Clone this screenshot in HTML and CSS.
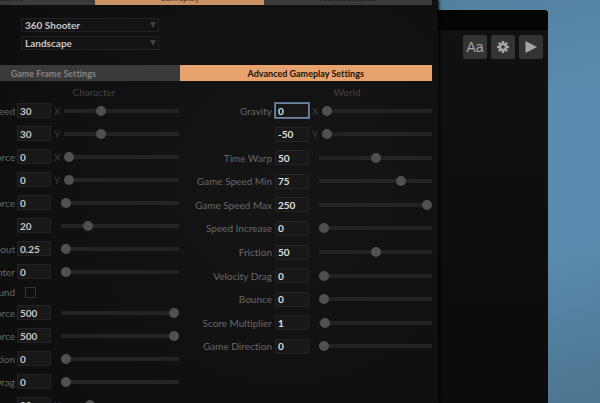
FILE: index.html
```html
<!DOCTYPE html>
<html lang="en">
<head>
  <meta charset="UTF-8" />
  <meta name="viewport" content="width=device-width, initial-scale=1.0" />
  <title>Gameplay Settings</title>
  <link rel="stylesheet" href="styles.css">
</head>
<body>
  <main class="panel">
    <div class="panel-content">
      <nav class="main-tabs">
        <button class="tab">Game</button>
        <button class="tab active">Gameplay</button>
        <button class="tab">Achievements</button>
      </nav>

      <div class="pickers">
        <div class="picker">
          <select aria-label="Game type">
            <option>360 Shooter</option>
          </select>
          <svg viewBox="0 0 6 6"><path d="M0 0h6L3 6z"/></svg>
        </div>
        <div class="picker">
          <select aria-label="Orientation">
            <option>Landscape</option>
          </select>
          <svg viewBox="0 0 6 6"><path d="M0 0h6L3 6z"/></svg>
        </div>
      </div>

      <nav class="sub-tabs">
        <button class="tab">Game Frame Settings</button>
        <button class="tab active">Advanced Gameplay Settings</button>
      </nav>

      <div class="columns">
        <section class="column character">
          <h2>Character</h2>
          <div class="rows" id="character"></div>
        </section>
        <section class="column world">
          <h2>World</h2>
          <div class="rows" id="world"></div>
        </section>
      </div>
    </div>
  </main>

  <aside class="preview">
    <div class="title-bar"></div>
    <div class="toolbar">
      <button aria-label="Text"><span>Aa</span></button>
      <button aria-label="Settings">
        <svg viewBox="0 0 12 12">
          <g fill="currentColor">
            <rect x="4.800" y="0" width="2.400" height="12"/>
            <rect x="4.800" y="0" width="2.400" height="12" transform="rotate(45 6 6)"/>
            <rect x="4.800" y="0" width="2.400" height="12" transform="rotate(90 6 6)"/>
            <rect x="4.800" y="0" width="2.400" height="12" transform="rotate(135 6 6)"/>
          </g>
          <circle cx="6" cy="6" r="3" fill="#343434" stroke="currentColor" stroke-width="2.400"/>
        </svg>
      </button>
      <button aria-label="Play">
        <svg viewBox="0 0 12 12"><path d="M0.500 0L12 6L0.500 12z" fill="currentColor"/></svg>
      </button>
    </div>
  </aside>

  <script>
    const character = [
      { label: "Speed", value: "30", axis: "X" },
      { label: "", name: "Speed Y", value: "30", axis: "Y" },
      { label: "Force", value: "0", axis: "X" },
      { label: "", name: "Force Y", value: "0", axis: "Y" },
      { label: "Force", value: "0" },
      { label: "", name: "Force amount", value: "20" },
      { label: "Timeout", value: "0.25" },
      { label: "Counter", value: "0" },
      { label: "Ground", checkbox: true },
      { label: "Force", value: "500", max: 500 },
      { label: "Force", value: "500", max: 500 },
      { label: "Friction", value: "0" },
      { label: "Drag", value: "0" },
      { label: "Drag", value: "20", axis: "X" }
    ];

    const world = [
      { label: "Gravity", value: "0", axis: "X", focused: true },
      { label: "", name: "Gravity Y", value: "-50", axis: "Y", min: -50 },
      { label: "Time Warp", value: "50" },
      { label: "Game Speed Min", value: "75" },
      { label: "Game Speed Max", value: "250", max: 250 },
      { label: "Speed Increase", value: "0" },
      { label: "Friction", value: "50" },
      { label: "Velocity Drag", value: "0" },
      { label: "Bounce", value: "0" },
      { label: "Score Multiplier", value: "1" },
      { label: "Game Direction", value: "0" }
    ];

    function renderRows(target, rows) {
      document.getElementById(target).innerHTML = rows.map((row, i) => {
        const id = `${target}-${i}`;
        const name = row.label || row.name;
        if (row.checkbox) {
          return `
            <div class="row check-row">
              <label for="${id}">${row.label}</label>
              <input type="checkbox" id="${id}" />
            </div>`;
        }
        return `
          <div class="row">
            <label for="${id}">${row.label}</label>
            <input type="text" id="${id}" class="${row.focused ? "focused" : ""}" value="${row.value}" aria-label="${name}" />
            <span class="axis">${row.axis || ""}</span>
            <input type="range" min="${row.min || 0}" max="${row.max || 100}" step="any" value="${row.value}" aria-label="${name} slider" />
          </div>`;
      }).join("");
    }

    renderRows("character", character);
    renderRows("world", world);
  </script>
</body>
</html>
```
FILE: styles.css
```css
* { box-sizing: border-box; margin: 0; padding: 0; }

body {
  display: flex;
  height: 100vh;
  padding-right: 52px;
  overflow: hidden;
  font-family: Lato, "Open Sans", sans-serif;
  font-size: 10px;
  font-variant-ligatures: none;
  color: #c8c8c8;
  background: linear-gradient(165deg, #4d7690 0%, #5b8bae 45%, #5b8bae 70%, #4d7490 100%);
}

button, input, select {
  font: inherit;
  color: inherit;
  border: none;
}

.panel {
  flex: 1;
  min-width: 0;
  padding-right: 6px;
  overflow: hidden;
  background: radial-gradient(circle at 65% 45%, #151515, #0d0d0d);
  box-shadow: 1px 0 3px #000;
  z-index: 1;
}

/* the panel is scrolled a little to the right */
.panel-content {
  margin-left: -73px;
}

.main-tabs, .sub-tabs {
  display: flex;
}

.main-tabs {
  height: 5px;
  align-items: flex-end;
}

.tab {
  flex: 1;
  height: 16px;
  font-size: 9px;
  font-weight: bold;
  color: #858585;
  background: #3a3a3a;
}

.main-tabs .tab {
  color: #222;
}

.tab.active {
  color: #1c120b;
  background: #e6a36e;
}

.main-tabs .tab.active {
  color: #6b4a30;
  background: #c99264;
}

.pickers {
  display: grid;
  gap: 4px;
  width: 138px;
  margin: 13px 0 15px 94px;
}

.picker {
  position: relative;
}

.picker select {
  display: block;
  width: 100%;
  height: 14px;
  padding-left: 3px;
  appearance: none;
  font-weight: bold;
  background: #131313;
  border: 1px solid #212121;
}

.picker svg {
  position: absolute;
  top: 4px;
  right: 3px;
  width: 6px;
  height: 6px;
  fill: #414141;
  pointer-events: none;
}

.columns {
  display: flex;
}

.column {
  flex: 1;
  min-width: 0;
}

.character {
  padding-right: 1px;
}

.column h2 {
  height: 18px;
  padding-left: 82px;
  line-height: 22px;
  font-size: 10px;
  font-weight: normal;
  text-align: center;
  color: #434343;
}

.rows {
  display: grid;
  grid-template-columns: minmax(0, 1fr);
}

.world .rows {
  height: 259px;
  grid-auto-rows: 1fr;
}

.row {
  display: flex;
  align-items: center;
  min-height: 23px;
}

.check-row {
  min-height: 18px;
}

.row label {
  flex: none;
  width: 88px;
  margin-right: 2px;
  text-align: right;
  color: #686868;
}

.world .row label {
  width: 92px;
  margin-right: 3px;
}

.row input[type="text"] {
  flex: none;
  width: 34px;
  height: 15px;
  padding-left: 2px;
  font-weight: bold;
  background: #191818;
  border: 1px solid #232323;
  outline: none;
}

.world .row input[type="text"] {
  color: #e0e0e0;
}

.row input[type="text"].focused {
  border-color: #6f84a0;
  box-shadow: 0 0 0 1px #5a6f8c;
}

.axis {
  flex: none;
  width: 10px;
  padding-left: 3px;
  color: #3d3d3d;
}

.axis:not(:empty) {
  width: 13px;
}

.row input[type="range"] {
  flex: 1;
  min-width: 0;
  height: 10px;
  appearance: none;
  background: linear-gradient(#232323, #232323) center / 100% 4px no-repeat;
}

.row input[type="range"]::-webkit-slider-thumb {
  appearance: none;
  width: 10px;
  height: 10px;
  border-radius: 50%;
  background: #505050;
}

.row input[type="checkbox"] {
  width: 11px;
  height: 11px;
  margin-left: 8px;
  appearance: none;
  border: 1px solid #333;
}

.preview {
  width: 110px;
  margin-top: 10px;
  border-radius: 0 4px 0 0;
  background: linear-gradient(#111, #0b0b0b);
}

.title-bar {
  height: 20px;
  border-bottom: 1px solid #000;
  border-radius: 0 4px 0 0;
  background: #050505;
}

.toolbar {
  display: flex;
  justify-content: flex-end;
  gap: 4px;
  padding: 5px 5px 0 0;
}

.toolbar button {
  display: flex;
  align-items: center;
  justify-content: center;
  width: 24px;
  height: 24px;
  font-family: "Liberation Sans", sans-serif;
  font-size: 14px;
  color: #a6a6a6;
  border-radius: 2px;
  background: #343434;
}

.toolbar svg {
  width: 12px;
  height: 12px;
}
```
